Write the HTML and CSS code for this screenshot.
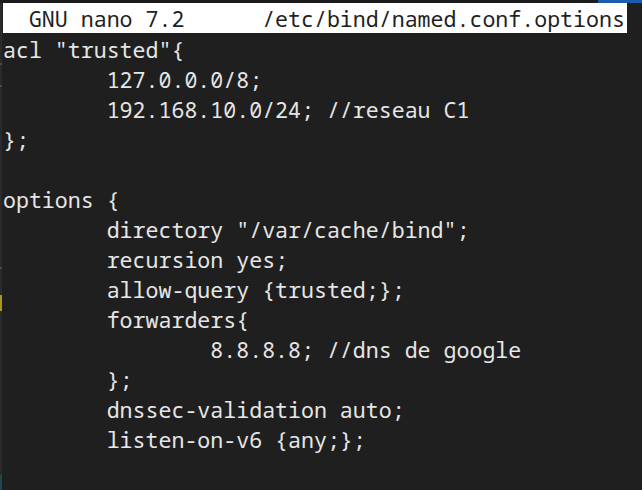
FILE: index.html
```html
<!DOCTYPE html>
<html lang="fr">
<head>
<meta charset="utf-8">
<title>GNU nano 7.2 - /etc/bind/named.conf.options</title>
<link rel="stylesheet" href="styles.css">
</head>
<body>
<div class="screen">
  <div class="top-strip"><span class="top-blue"></span></div>
  <div class="main">
    <div class="left-edge">
      <span class="edge-mark m1"></span>
      <span class="edge-mark m2"></span>
      <span class="edge-mark m3"></span>
      <span class="edge-yellow"></span>
      <span class="edge-teal"></span>
    </div>
    <div class="terminal">
      <div class="titlebar">  GNU nano 7.2      /etc/bind/named.conf.options</div>
<pre class="buffer">acl "trusted"{
        127.0.0.0/8;
        192.168.10.0/24; //reseau C1
};

options {
        directory "/var/cache/bind";
        recursion yes;
        allow-query {trusted;};
        forwarders{
                8.8.8.8; //dns de google
        };
        dnssec-validation auto;
        listen-on-v6 {any;};

</pre>
    </div>
  </div>
</div>
</body>
</html>
```

FILE: styles.css
```css
html, body {
  margin: 0;
  padding: 0;
  background: #1f1f1f;
  width: 642px;
  height: 490px;
  overflow: hidden;
}

.screen {
  display: flex;
  flex-direction: column;
  width: 642px;
  height: 490px;
}

.top-strip {
  height: 3px;
  background: #1b1b1b;
  display: flex;
  justify-content: flex-end;
  flex: none;
}

.top-blue {
  width: 44px;
  height: 3px;
  background: #1d5bb0;
}

.main {
  display: flex;
  flex: 1;
}

.left-edge {
  width: 2px;
  margin-right: 1px;
  background: #2a2a2a;
  display: flex;
  flex-direction: column;
  flex: none;
}

.edge-mark {
  display: block;
  height: 2px;
  background: #4a4560;
}
.m1 { margin-top: 60px; }
.m2 { margin-top: 20px; }
.m3 { margin-top: 180px; }

.edge-yellow {
  display: block;
  height: 16px;
  margin-top: 26px;
  background: #a89a1a;
}

.edge-teal {
  display: block;
  height: 15px;
  margin-top: auto;
  background: #1d4650;
}

.terminal {
  display: flex;
  flex-direction: column;
  font-family: "Noto Sans Mono", "DejaVu Sans Mono", "Liberation Mono", monospace;
  font-size: 21.6px;
  line-height: 30px;
}

.titlebar {
  box-sizing: border-box;
  width: 624px;
  height: 30px;
  padding-top: 1px;
  overflow: hidden;
  background: #ffffff;
  color: #1f1f1f;
  white-space: pre;
}

.buffer {
  margin: 2px 0 0;
  font: inherit;
  color: #e6e6e6;
  white-space: pre;
}
```
